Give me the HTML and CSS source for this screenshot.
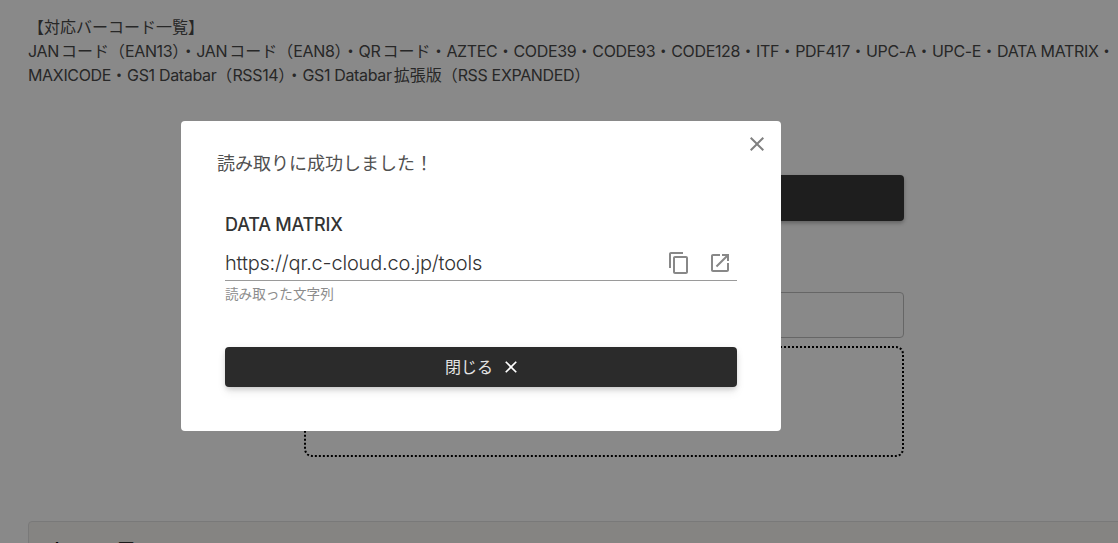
FILE: index.html
```html
<!DOCTYPE html>
<html lang="ja">
<head>
<meta charset="utf-8">
<title>バーコード読み取り</title>
<link rel="stylesheet" href="styles.css">
</head>
<body>
<main class="page">
  <p class="intro">【対応バーコード一覧】<br><span class="lat">JAN</span>コード（<span class="lat">EAN13</span>）・<span class="lat">JAN</span>コード（<span class="lat">EAN8</span>）・<span class="lat">QR</span>コード・<span class="lat">AZTEC</span>・<span class="lat">CODE39</span>・<span class="lat">CODE93</span>・<span class="lat">CODE128</span>・<span class="lat">ITF</span>・<span class="lat">PDF417</span>・<span class="lat">UPC-A</span>・<span class="lat">UPC-E</span>・<span class="lat">DATA MATRIX</span>・<br><span class="lat">MAXICODE</span>・<span class="lat">GS1 Databar</span>（<span class="lat">RSS14</span>）・<span class="lat">GS1 Databar</span>拡張版（<span class="lat">RSS EXPANDED</span>）</p>
  <section class="tool">
    <div class="primary"></div>
    <div class="field"></div>
    <div class="drop"></div>
  </section>
  <section class="history"><h2 class="history-title">読み取り履歴</h2></section>
</main>
<div class="backdrop"></div>
<div class="dialog" role="dialog">
  <button class="dialog-close" aria-label="閉じる">
    <svg viewBox="0 0 24 24" class="icon"><path d="M19 6.41 17.59 5 12 10.59 6.41 5 5 6.41 10.59 12 5 17.59 6.41 19 12 13.41 17.59 19 19 17.59 13.41 12z"/></svg>
  </button>
  <h1 class="dialog-title">読み取りに成功しました！</h1>
  <div class="result">
    <h2 class="result-type">DATA MATRIX</h2>
    <div class="result-row">
      <span class="result-value">https://qr.c-cloud.co.jp/tools</span>
      <span class="result-actions">
        <svg viewBox="0 0 24 24" class="icon"><path d="M16 1H4c-1.1 0-2 .9-2 2v14h2V3h12V1zm3 4H8c-1.1 0-2 .9-2 2v14c0 1.100.9 2 2 2h11c1.100 0 2-.9 2-2V7c0-1.100-.9-2-2-2zm0 16H8V7h11v14z"/></svg>
        <svg viewBox="0 0 24 24" class="icon"><path d="M19 19H5V5h7V3H5c-1.110 0-2 .9-2 2v14c0 1.100.89 2 2 2h14c1.100 0 2-.9 2-2v-7h-2v7zM14 3v2h3.590l-9.830 9.830 1.410 1.410L19 6.410V10h2V3h-7z"/></svg>
      </span>
    </div>
    <p class="result-help">読み取った文字列</p>
    <button class="close-button">閉じる
      <svg viewBox="0 0 24 24" class="icon-small"><path d="M19 6.41 17.59 5 12 10.59 6.41 5 5 6.41 10.59 12 5 17.59 6.41 19 12 13.41 17.59 19 19 17.59 13.41 12z"/></svg>
    </button>
  </div>
</div>
</body>
</html>
```
FILE: styles.css
```css
* { box-sizing: border-box; }
html, body { margin: 0; height: 100%; overflow: hidden; }
body {
  background: #fff;
  color: #4a4a4a;
  font-family: Inter, "Noto Sans CJK JP", sans-serif;
  font-size: 16px;
  line-height: 24px;
}
.page { padding: 15px 0 0 28px; }
.intro { margin: 0; text-autospace: normal; }
.lat { letter-spacing: -.34px; }
.tool {
  width: 600px;
  margin: 0 0 0 276px;
  padding-top: 88px;
  display: flex;
  flex-direction: column;
}
.primary {
  height: 46px;
  background: #383838;
  border-radius: 4px;
  box-shadow: 0 2px 4px rgba(0,0,0,.3);
}
.field {
  height: 46px;
  margin-top: 71px;
  border: 1px solid #bfbfbf;
  border-radius: 4px;
}
.drop {
  height: 111px;
  margin-top: 8px;
  border: 2px dotted #000;
  border-radius: 8px;
}
.history {
  margin-top: 64px;
  margin-right: -20px;
  height: 120px;
  padding: 18px 16px;
  background: #f8f6f3;
  border: 1px solid #e2e2e2;
  border-radius: 4px;
}
.history-title { margin: 0; font-size: 18px; line-height: 24px; font-weight: 700; color: #000; }
.backdrop { position: fixed; inset: 0; background: rgba(0,0,0,.463); }
.dialog {
  position: fixed;
  left: 181px;
  top: 121px;
  width: 600px;
  height: 310px;
  background: #fff;
  border-radius: 4px;
  padding: 31px 44px 0 36px;
}
.dialog-close {
  position: absolute;
  top: 10px;
  right: 11px;
  width: 26px;
  height: 26px;
  padding: 1px;
  border: 0;
  background: none;
  color: #808080;
}
.icon { display: block; width: 24px; height: 24px; fill: currentColor; }
.dialog-title {
  margin: 0;
  font-size: 18px;
  line-height: 24px;
  font-weight: 400;
  color: #505050;
}
.result { padding: 0 0 0 8px; margin-top: 37px; }
.result-type { margin: 0; font-size: 18px; line-height: 24px; font-weight: 500; letter-spacing: -.2px; color: #333; }
.result-row {
  display: flex;
  justify-content: space-between;
  align-items: center;
  height: 35px;
  margin-top: 9px;
  border-bottom: 1px solid #9a9a9a;
}
.result-value { font-size: 20px; font-weight: 300; letter-spacing: -.2px; color: #333; }
.result-actions { display: flex; gap: 17px; color: #888; padding-right: 5px; }
.result-help { margin: 1px 0 0; font-size: 13.6px; line-height: 24px; color: #8c8c8c; }
.close-button {
  display: flex;
  align-items: center;
  justify-content: center;
  gap: 8px;
  width: 100%;
  height: 40px;
  margin-top: 41px;
  border: 0;
  border-radius: 4px;
  background: #2b2b2b;
  color: #e4e4e4;
  font: inherit;
  box-shadow: 0 3px 5px -1px rgba(0,0,0,.14), 0 6px 10px 0 rgba(0,0,0,.06), 0 1px 8px 0 rgba(0,0,0,.06);
}
.icon-small { display: block; width: 20px; height: 20px; margin-right: -4px; fill: #fff; }
```
